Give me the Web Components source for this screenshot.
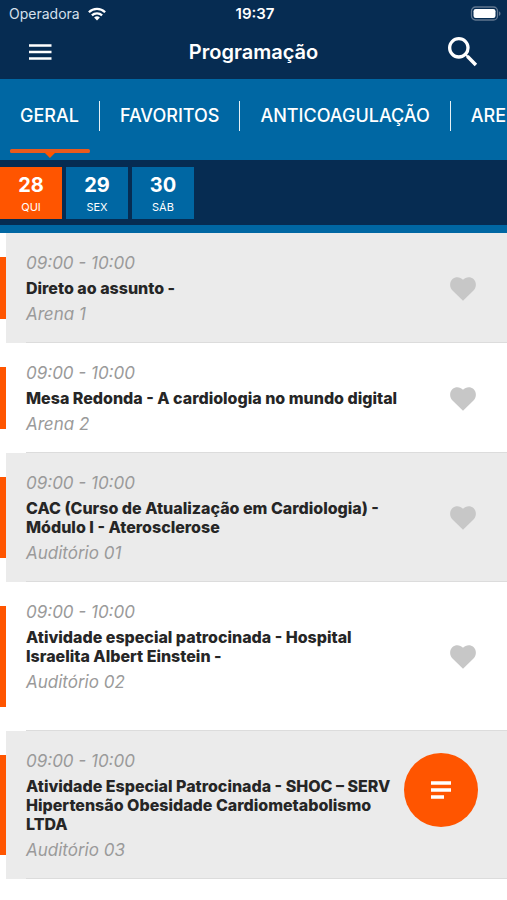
<!DOCTYPE html>
<html lang="pt-BR">
<head>
<meta charset="utf-8">
<meta name="viewport" content="width=device-width, initial-scale=1">
<title>Programação</title>
<style>
  body { margin: 0; background: #fff; font-family: Inter, "Liberation Sans", sans-serif; color: #262626; }
</style>
</head>
<body>
<schedule-app></schedule-app>

<script>
function define(name, html) {
  const template = document.createElement('template');
  template.innerHTML = '<style>*{box-sizing:border-box}button{font:inherit;color:inherit;background:none;border:0;margin:0;padding:0;cursor:pointer}svg{display:block}</style>' + html;
  customElements.define(name, class extends HTMLElement {
    constructor() {
      super();
      this.attachShadow({ mode: 'open' }).appendChild(template.content.cloneNode(true));
    }
  });
}

define('status-bar', `
<style>
  :host { display: grid; grid-template-columns: 1fr auto 1fr; align-items: center; height: 28px; padding: 0 6px 0 9px; background: #062c52; color: #fff; font-size: 14px; line-height: 20px; }
  .carrier { display: flex; align-items: center; gap: 8px; color: #d5e0ec; }
  .clock { font-size: 15px; font-weight: 600; }
  .battery { justify-self: end; }
</style>
<div class="carrier"><span>Operadora</span>
  <svg width="18" height="14" viewBox="0 0 18 14" aria-label="Wi-Fi"><g fill="none" stroke="#fff" stroke-width="2.3"><path d="M.9 5.2a11.6 11.6 0 0 1 16.2 0"/><path d="M3.9 8.4a7.3 7.3 0 0 1 10.2 0"/></g><path fill="#fff" d="M9 13.5 6.1 10.600a4.100 4.100 0 0 1 5.800 0z"/></svg>
</div>
<div class="clock">19:37</div>
<svg class="battery" width="31" height="16" viewBox="0 0 31 16" aria-label="Bateria"><rect x="1.500" y="1" width="26" height="13" rx="4" fill="none" stroke="#60768f" stroke-width="1.300"/><rect x="3.500" y="3" width="22" height="9" rx="2.200" fill="#fff"/><path d="M29 5.500c2 .7 2 3.600 0 4.300z" fill="#60768f"/></svg>
`);

define('title-bar', `
<style>
  :host { display: grid; grid-template-columns: 1fr auto 1fr; align-items: center; height: 51px; padding: 0 24px 4px; background: #062c52; color: #fff; }
  h1 { margin: 0; font-size: 20px; line-height: 28px; font-weight: 600; }
  .search { justify-self: end; }
  .menu { justify-self: start; padding-left: 4px; }
</style>
<button class="menu" aria-label="Menu"><svg width="24" height="18" viewBox="0 0 24 18"><path d="M1 2.500h22.500M1 9h22.500M1 15.500h22.500" stroke="#fff" stroke-width="2.500"/></svg></button>
<h1><slot></slot></h1>
<button class="search" aria-label="Buscar"><svg width="40" height="40" viewBox="0 0 24 24"><path fill="#fff" d="M15.500 14h-.79l-.28-.27A6.471 6.471 0 0 0 16 9.500 6.500 6.500 0 1 0 9.500 16c1.610 0 3.090-.59 4.230-1.570l.27.28v.79l5 4.990L20.490 19l-4.990-5zm-6 0C7.010 14 5 11.990 5 9.500S7.010 5 9.500 5 14 7.010 14 9.500 11.990 14 9.500 14z"/></svg></button>
`);

define('tab-strip', `
<style>
  :host { display: flex; height: 81px; overflow: hidden; background: #0067a3; color: #fff; }
</style>
<slot></slot>
`);

define('tab-item', `
<style>
  :host { position: relative; display: flex; flex: none; align-items: center; height: 74px; }
  button { height: 30px; padding: 0 20px; border-right: 1px solid #e6f0f5; font-size: 18px; line-height: 30px; font-weight: 500; white-space: nowrap; }
  svg { display: none; }
  :host([selected]) svg { display: block; position: absolute; left: 10px; bottom: -6px; width: calc(100% - 20px); height: 10px; overflow: visible; }
</style>
<button role="tab"><slot></slot></button>
<svg viewBox="0 0 80 10" preserveAspectRatio="none"><rect width="80" height="4" rx="1.500" fill="#ea5a1c"/><path d="M34 3h12l-6 6z" fill="#ff5500"/></svg>
`);

define('date-strip', `
<style>
  :host { display: flex; gap: 4px; padding: 7px 0 6px; background: #062c52; border-bottom: 8px solid #0067a3; color: #fff; }
</style>
<slot></slot>
`);

define('date-tile', `
<style>
  :host { display: block; width: 62px; background: #0067a3; }
  :host([selected]) { background: #ff5500; }
  button { display: flex; flex-direction: column; align-items: center; width: 100%; height: 52px; padding-top: 6px; }
  .day { font-size: 20px; line-height: 24px; font-weight: 700; }
  .week { font-size: 11px; line-height: 20px; }
</style>
<button><span class="day"><slot name="day"></slot></span><span class="week"><slot></slot></span></button>
`);

define('session-row', `
<style>
  :host { display: grid; grid-template-columns: 6px 1fr; background: #fff; }
  .mark { margin: 24px 0; background: #ff5500; }
  .card { position: relative; display: grid; grid-template-columns: 1fr 88px; padding: 20px 0 19px 20px; }
  .card::after { content: ""; position: absolute; left: 20px; right: 0; bottom: 0; height: 1px; background: #dcdcdc; }
  :host([shaded]) .card { background: #ebebeb; }
  .text { padding-right: 8px; }
  :host([spacious]) .text { padding-bottom: 20px; }
  .meta { font-size: 17px; line-height: 20px; font-style: italic; color: #9a9a9a; }
  h2 { margin: 6px 0; font-size: 16px; line-height: 19px; font-weight: 800; }
  button { align-self: center; justify-self: center; }
</style>
<div class="mark"></div>
<div class="card">
  <div class="text">
    <div class="meta"><slot name="time"></slot></div>
    <h2><slot></slot></h2>
    <div class="meta"><slot name="room"></slot></div>
  </div>
  <button aria-label="Favoritar"><svg width="26" height="24" viewBox="0 0 26 24"><path fill="#c7c7c7" d="M13 23.700 2.500 13.500C-.9 10-.4 4.600 2.500 2 5.700-.8 10.300-.2 13 2.800 15.700-.2 20.300-.8 23.500 2c2.900 2.600 3.400 8 0 11.500z"/></svg></button>
</div>
`);

define('action-button', `
<style>
  :host { position: fixed; right: 29px; bottom: 73px; }
  button { display: grid; place-items: center; width: 74px; height: 74px; border-radius: 50%; background: #ff5500; }
</style>
<button aria-label="Filtrar"><svg width="20" height="20" viewBox="0 0 20 20"><path d="M0 3h20M0 10h20M0 17h13" stroke="#fff" stroke-width="3.600"/></svg></button>
`);

define('schedule-app', `
<style>
  :host { display: block; overflow: hidden; }
</style>
<status-bar></status-bar>
<title-bar>Programação</title-bar>
<tab-strip role="tablist">
  <tab-item selected>GERAL</tab-item>
  <tab-item>FAVORITOS</tab-item>
  <tab-item>ANTICOAGULAÇÃO</tab-item>
  <tab-item>ARENA</tab-item>
</tab-strip>
<date-strip>
  <date-tile selected><span slot="day">28</span>QUI</date-tile>
  <date-tile><span slot="day">29</span>SEX</date-tile>
  <date-tile><span slot="day">30</span>SÁB</date-tile>
</date-strip>
<main>
  <session-row shaded><span slot="time">09:00 - 10:00</span>Direto ao assunto -<span slot="room">Arena 1</span></session-row>
  <session-row><span slot="time">09:00 - 10:00</span>Mesa Redonda - A cardiologia no mundo digital<span slot="room">Arena 2</span></session-row>
  <session-row shaded><span slot="time">09:00 - 10:00</span>CAC (Curso de Atualização em Cardiologia) - Módulo I - Aterosclerose<span slot="room">Auditório 01</span></session-row>
  <session-row spacious><span slot="time">09:00 - 10:00</span>Atividade especial patrocinada - Hospital Israelita Albert Einstein -<span slot="room">Auditório 02</span></session-row>
  <session-row shaded><span slot="time">09:00 - 10:00</span>Atividade Especial Patrocinada - SHOC – SERV Hipertensão Obesidade Cardiometabolismo LTDA<span slot="room">Auditório 03</span></session-row>
</main>
<action-button></action-button>
`);
</script>
</body>
</html>
